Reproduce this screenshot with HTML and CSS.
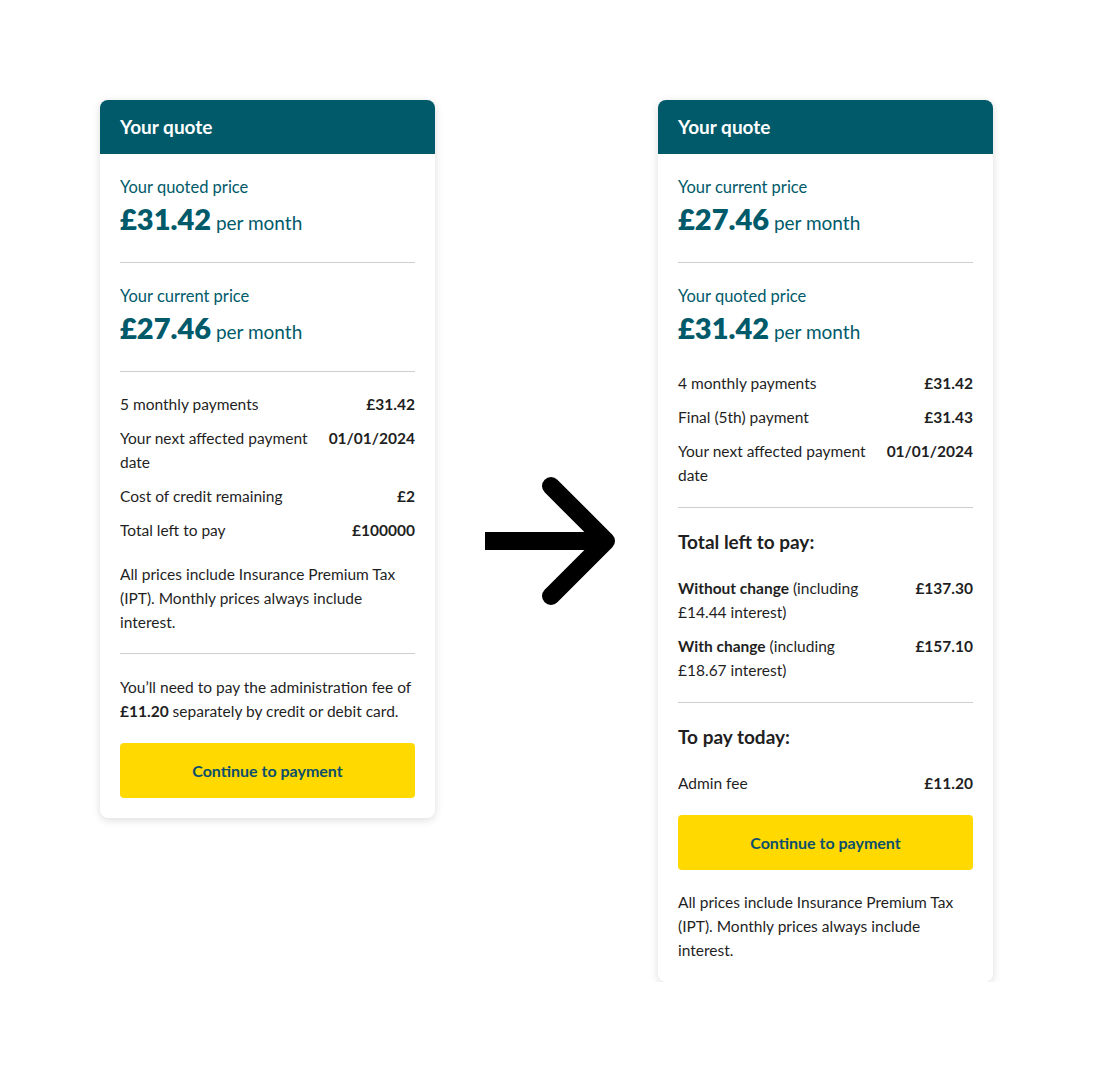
FILE: index.html
```html
<!DOCTYPE html>
<html lang="en">
<head>
    <meta charset="UTF-8">
    <meta name="viewport" content="width=device-width, initial-scale=1.0">
    <title>Your quote - before and after</title>
    <link rel="stylesheet" href="styles.css">
</head>
<body>
    <div class="compare">
        <!-- Before -->
        <div class="card">
            <div class="card-header">Your quote</div>
            <div class="card-body">
                <div class="price-block">
                    <div class="price-label">Your quoted price</div>
                    <div class="price"><span class="amount">£31.42</span> per month</div>
                </div>
                <hr class="divider">
                <div class="price-block">
                    <div class="price-label">Your current price</div>
                    <div class="price"><span class="amount">£27.46</span> per month</div>
                </div>
                <hr class="divider">
                <div class="rows">
                    <div class="row"><span class="row-label">5 monthly payments</span><span class="row-value">£31.42</span></div>
                    <div class="row"><span class="row-label">Your next affected payment date</span><span class="row-value">01/01/2024</span></div>
                    <div class="row"><span class="row-label">Cost of credit remaining</span><span class="row-value">£2</span></div>
                    <div class="row"><span class="row-label">Total left to pay</span><span class="row-value">£100000</span></div>
                </div>
                <p class="note note--tax">All prices include Insurance Premium Tax (IPT). Monthly prices always include interest.</p>
                <hr class="divider">
                <p class="note note--fee">You’ll need to pay the administration fee of <strong>£11.20</strong> separately by credit or debit card.</p>
                <button class="pay-btn">Continue to payment</button>
            </div>
        </div>

        <svg class="arrow" width="130" height="130" viewBox="0 0 130 130">
            <line x1="0" y1="65" x2="116" y2="65" stroke="#000" stroke-width="18"/>
            <polyline points="66,10 121,65 66,120" fill="none" stroke="#000" stroke-width="18" stroke-linecap="round" stroke-linejoin="round"/>
        </svg>

        <!-- After -->
        <div class="card">
            <div class="card-header">Your quote</div>
            <div class="card-body">
                <div class="price-block">
                    <div class="price-label">Your current price</div>
                    <div class="price"><span class="amount">£27.46</span> per month</div>
                </div>
                <hr class="divider">
                <div class="price-block">
                    <div class="price-label">Your quoted price</div>
                    <div class="price"><span class="amount">£31.42</span> per month</div>
                </div>
                <div class="rows">
                    <div class="row"><span class="row-label">4 monthly payments</span><span class="row-value">£31.42</span></div>
                    <div class="row"><span class="row-label">Final (5th) payment</span><span class="row-value">£31.43</span></div>
                    <div class="row"><span class="row-label">Your next affected payment date</span><span class="row-value">01/01/2024</span></div>
                </div>
                <hr class="divider">
                <h2 class="sub-title">Total left to pay:</h2>
                <div class="rows">
                    <div class="row"><span class="row-label"><b>Without change</b> (including £14.44 interest)</span><span class="row-value">£137.30</span></div>
                    <div class="row"><span class="row-label"><b>With change</b> (including £18.67 interest)</span><span class="row-value">£157.10</span></div>
                </div>
                <hr class="divider">
                <h2 class="sub-title">To pay today:</h2>
                <div class="rows">
                    <div class="row"><span class="row-label">Admin fee</span><span class="row-value">£11.20</span></div>
                </div>
                <button class="pay-btn">Continue to payment</button>
                <p class="note">All prices include Insurance Premium Tax (IPT). Monthly prices always include interest.</p>
            </div>
        </div>
    </div>
</body>
</html>
```

FILE: styles.css
```css
body {
    margin: 0;
    padding: 100px 0 0 100px;
    background: #ffffff;
    font-family: "Source Sans Pro", Lato, "Liberation Sans", sans-serif;
    color: #1f1f1f;
}
.compare {
    display: flex;
    align-items: flex-start;
}
.card {
    width: 335px;
    background: #fff;
    border-radius: 8px;
    box-shadow: 0 2px 8px rgba(0, 0, 0, 0.14);
    overflow: hidden;
}
.card-header {
    background: #005a6a;
    color: #fff;
    font-weight: 700;
    font-size: 19px;
    height: 54px;
    line-height: 54px;
    padding: 0 20px;
}
.card-body {
    padding: 20px;
    display: flex;
    flex-direction: column;
    gap: 20px;
}
.price-block {
    padding: 1px 0;
}
.price-label {
    color: #005a6a;
    font-size: 16.5px;
    line-height: 24px;
}
.price {
    color: #005a6a;
    font-size: 19px;
    line-height: 36px;
    margin-top: 5px;
}
.amount {
    font-size: 29px;
    font-weight: 800;
    line-height: 1;
}
.divider {
    border: 0;
    border-top: 1px solid #cfcfcf;
    margin: 0;
}
.rows {
    display: flex;
    flex-direction: column;
    gap: 10px;
}
.row {
    display: flex;
    justify-content: space-between;
    gap: 16px;
    font-size: 15.5px;
    line-height: 24px;
}
.row-label {
    max-width: 65%;
}
.row-value {
    font-weight: 700;
    text-align: right;
    white-space: nowrap;
}
.note {
    margin: 0;
    font-size: 15.5px;
    line-height: 24px;
}
.note--tax {
    margin-bottom: -1px;
}
.note--fee {
    margin-top: 1px;
}
.sub-title {
    margin: 0;
    font-size: 19px;
    line-height: 28px;
    font-weight: 700;
}
.pay-btn {
    display: block;
    width: 100%;
    height: 55px;
    border: none;
    border-radius: 4px;
    background: #ffd900;
    color: #0b4f6c;
    font-family: inherit;
    font-size: 16px;
    font-weight: 700;
    cursor: pointer;
}
.arrow {
    align-self: center;
    flex-shrink: 0;
    margin: 0 43px 0 50px;
}
```
